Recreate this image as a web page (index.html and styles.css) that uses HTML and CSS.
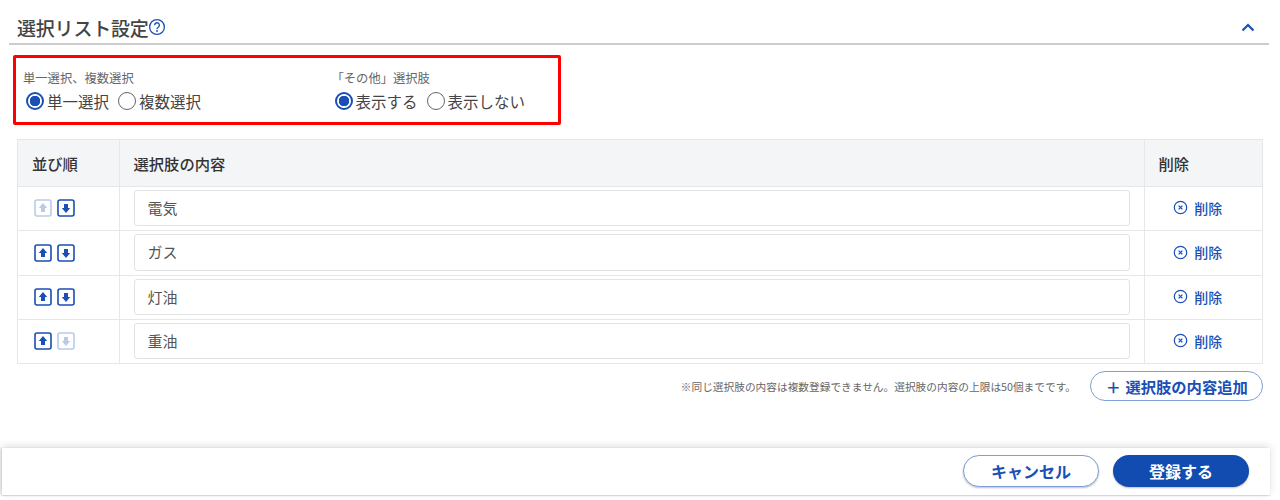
FILE: index.html
```html
<!DOCTYPE html>
<html lang="ja">
<head>
    <meta charset="UTF-8">
    <title>選択リスト設定</title>
    <link rel="stylesheet" href="styles.css">
</head>
<body>
    <section class="panel">
        <div class="section-head">
            <h2 class="section-title">選択リスト設定</h2>
            <svg class="help-icon" width="18" height="18" viewBox="0 0 18 18">
                <circle cx="9" cy="9" r="7.4" fill="none" stroke="#1a4fb5" stroke-width="1.3"/>
                <path d="M6.6 7.2a2.4 2.4 0 1 1 3.7 2c-.9.6-1.3 1-1.3 2" fill="none" stroke="#1a4fb5" stroke-width="1.3"/>
                <circle cx="9" cy="13" r=".9" fill="#1a4fb5"/>
            </svg>
            <svg class="chevron" width="14" height="9" viewBox="0 0 14 9">
                <path d="M1.5 7.5 7 2l5.5 5.5" fill="none" stroke="#1a4fb5" stroke-width="2.2"/>
            </svg>
        </div>

        <div class="highlight">
            <div class="option-group option-group-first">
                <div class="option-label">単一選択、複数選択</div>
                <div class="radios">
                    <span class="radio radio-on"></span><span class="radio-text">単一選択</span>
                    <span class="radio"></span><span class="radio-text">複数選択</span>
                </div>
            </div>
            <div class="option-group">
                <div class="option-label">「その他」選択肢</div>
                <div class="radios">
                    <span class="radio radio-on"></span><span class="radio-text">表示する</span>
                    <span class="radio"></span><span class="radio-text">表示しない</span>
                </div>
            </div>
        </div>

        <table class="choice-table">
            <thead>
                <tr>
                    <th class="col-order">並び順</th>
                    <th>選択肢の内容</th>
                    <th class="col-delete">削除</th>
                </tr>
            </thead>
            <tbody>
                <tr class="row-a">
                    <td><div class="arrows">
                        <svg class="arrow arrow-off" viewBox="0 0 18 18"><rect x="1" y="1" width="16" height="16" rx="2" fill="#fff" stroke="currentColor" stroke-width="1.6"/><path d="M9 4l4.2 5H11v4H7V9H4.800z" fill="currentColor"/></svg>
                        <svg class="arrow" viewBox="0 0 18 18"><rect x="1" y="1" width="16" height="16" rx="2" fill="#fff" stroke="currentColor" stroke-width="1.6"/><path d="M9 14l4.200-5H11V5H7v4H4.800z" fill="currentColor"/></svg>
                    </div></td>
                    <td><input class="text-input" type="text" value="電気"></td>
                    <td><a class="delete-link"><svg class="x-icon" viewBox="0 0 16 16"><circle cx="8" cy="8" r="6.600" fill="none" stroke="currentColor" stroke-width="1.300"/><path d="M6 6l4 4m0-4-4 4" stroke="currentColor" stroke-width="1.400"/></svg>削除</a></td>
                </tr>
                <tr class="row-b">
                    <td><div class="arrows">
                        <svg class="arrow" viewBox="0 0 18 18"><rect x="1" y="1" width="16" height="16" rx="2" fill="#fff" stroke="currentColor" stroke-width="1.6"/><path d="M9 4l4.2 5H11v4H7V9H4.800z" fill="currentColor"/></svg>
                        <svg class="arrow" viewBox="0 0 18 18"><rect x="1" y="1" width="16" height="16" rx="2" fill="#fff" stroke="currentColor" stroke-width="1.6"/><path d="M9 14l4.200-5H11V5H7v4H4.800z" fill="currentColor"/></svg>
                    </div></td>
                    <td><input class="text-input" type="text" value="ガス"></td>
                    <td><a class="delete-link"><svg class="x-icon" viewBox="0 0 16 16"><circle cx="8" cy="8" r="6.600" fill="none" stroke="currentColor" stroke-width="1.300"/><path d="M6 6l4 4m0-4-4 4" stroke="currentColor" stroke-width="1.400"/></svg>削除</a></td>
                </tr>
                <tr class="row-a">
                    <td><div class="arrows">
                        <svg class="arrow" viewBox="0 0 18 18"><rect x="1" y="1" width="16" height="16" rx="2" fill="#fff" stroke="currentColor" stroke-width="1.6"/><path d="M9 4l4.2 5H11v4H7V9H4.800z" fill="currentColor"/></svg>
                        <svg class="arrow" viewBox="0 0 18 18"><rect x="1" y="1" width="16" height="16" rx="2" fill="#fff" stroke="currentColor" stroke-width="1.6"/><path d="M9 14l4.200-5H11V5H7v4H4.800z" fill="currentColor"/></svg>
                    </div></td>
                    <td><input class="text-input" type="text" value="灯油"></td>
                    <td><a class="delete-link"><svg class="x-icon" viewBox="0 0 16 16"><circle cx="8" cy="8" r="6.600" fill="none" stroke="currentColor" stroke-width="1.300"/><path d="M6 6l4 4m0-4-4 4" stroke="currentColor" stroke-width="1.400"/></svg>削除</a></td>
                </tr>
                <tr class="row-a">
                    <td><div class="arrows">
                        <svg class="arrow" viewBox="0 0 18 18"><rect x="1" y="1" width="16" height="16" rx="2" fill="#fff" stroke="currentColor" stroke-width="1.6"/><path d="M9 4l4.2 5H11v4H7V9H4.800z" fill="currentColor"/></svg>
                        <svg class="arrow arrow-off" viewBox="0 0 18 18"><rect x="1" y="1" width="16" height="16" rx="2" fill="#fff" stroke="currentColor" stroke-width="1.6"/><path d="M9 14l4.200-5H11V5H7v4H4.800z" fill="currentColor"/></svg>
                    </div></td>
                    <td><input class="text-input" type="text" value="重油"></td>
                    <td><a class="delete-link"><svg class="x-icon" viewBox="0 0 16 16"><circle cx="8" cy="8" r="6.600" fill="none" stroke="currentColor" stroke-width="1.300"/><path d="M6 6l4 4m0-4-4 4" stroke="currentColor" stroke-width="1.400"/></svg>削除</a></td>
                </tr>
            </tbody>
        </table>

        <div class="add-row">
            <span class="note">※同じ選択肢の内容は複数登録できません。選択肢の内容の上限は50個までです。</span>
            <button class="add-button" type="button"><span class="plus">+</span>選択肢の内容追加</button>
        </div>
    </section>

    <footer class="action-bar">
        <button class="btn btn-cancel" type="button">キャンセル</button>
        <button class="btn btn-submit" type="button">登録する</button>
    </footer>
</body>
</html>
```

FILE: styles.css
```css
html, body { height: 500px; overflow: hidden; }
body { margin: 0; background: #fff; color: #444; font-family: "Noto Sans CJK JP", "Noto Sans", sans-serif; }

.panel { padding: 0 17px; }

.section-head { display: flex; align-items: center; height: 45px; margin: 0 -6px 0 -8px; padding: 11px 14px 0 8px; box-sizing: border-box; border-bottom: 2px solid #ccc; }
.section-title { margin: 0; padding-top: 2px; font-size: 19px; font-weight: 500; color: #444; line-height: 24px; letter-spacing: -0.2px; }
.help-icon { margin-left: -1px; }
.chevron { margin-left: auto; }

.highlight { display: flex; width: 548px; height: 70px; box-sizing: border-box; margin: 10px 0 14px -4px; padding: 12px 7px 0; border: 3px solid #f00; border-radius: 2px; }
.option-group-first { width: 308.5px; }
.option-label { font-size: 12.3px; line-height: 17px; color: #666; }
.radios { display: flex; align-items: center; margin-top: 3px; padding-left: 3px; font-size: 15.5px; line-height: 22px; }
.radio { width: 18px; height: 18px; box-sizing: border-box; border: 1.5px solid #666; border-radius: 50%; background: #fff; }
.radio-on { border: 2px solid #1a4fb5; background: radial-gradient(circle, #1a4fb5 0 5px, #fff 5.500px); }
.radio-text { margin: 0 9px 0 3px; }

.choice-table { width: 1246px; table-layout: fixed; border-collapse: collapse; }
.choice-table th, .choice-table td { border: 1.500px solid #e6e7e9; padding: 0 14px; }
.choice-table th { height: 45.5px; background: #f4f5f7; font-size: 15.3px; font-weight: 500; text-align: left; color: #333; }
.col-order { width: 72.5px; }
.col-delete { width: 89.5px; }
.row-a td { height: 43px; }
.row-b td { height: 44px; }

.arrows { display: flex; gap: 5px; padding-left: 2px; }
.arrow { width: 18px; height: 18px; color: #1a4fb5; }
.arrow-off { color: #b9caea; }

.text-input { display: block; width: 100%; height: 36.5px; box-sizing: border-box; padding: 0 13px 2px; border: 1.500px solid #e2e3e5; border-radius: 3px; background: #fff; font-family: inherit; font-size: 15px; color: #555; }

.delete-link { display: flex; align-items: center; justify-content: center; gap: 6px; padding: 0 11px 1px 0; color: #1a4fb5; font-size: 14px; font-weight: 500; }
.x-icon { width: 15px; height: 15px; }

.add-row { display: flex; align-items: center; justify-content: flex-end; gap: 14px; margin-top: 7.5px; }
.note { font-size: 10.7px; color: #666; }
.add-button { display: flex; align-items: center; justify-content: center; width: 173px; height: 30px; padding: 0 0 0 2px; border: 1.500px solid #7f9fd8; border-radius: 15px; background: #fff; color: #1a4fb5; font-family: inherit; font-size: 15.3px; font-weight: 700; }
.plus { margin-right: 6px; font-size: 22px; font-weight: 400; line-height: 20px; }

.action-bar { display: flex; justify-content: flex-end; gap: 14px; width: 1268px; height: 47px; box-sizing: border-box; margin: 47px 0 0 2px; padding: 7px 21px 0 0; background: #fff; box-shadow: 0 -2px 8px rgba(0,0,0,.12), -2px 0 2px rgba(0,0,0,.1), 0 1px 1px rgba(0,0,0,.1); }
.btn { width: 136px; height: 32px; border-radius: 16px; font-family: inherit; font-size: 16px; font-weight: 700; }
.btn-cancel { border: 1.500px solid #7f9fd8; background: #fff; color: #1a4fb5; box-shadow: 0 1px 2px rgba(0,0,0,.25); }
.btn-submit { border: 0; background: #134cb0; color: #fff; box-shadow: 0 1px 2px rgba(0,0,0,.25); }
```
